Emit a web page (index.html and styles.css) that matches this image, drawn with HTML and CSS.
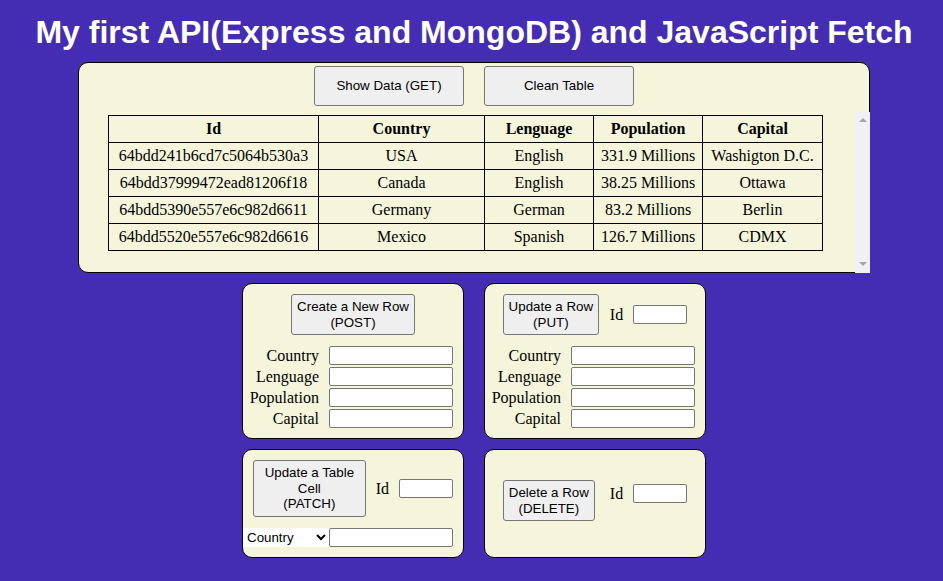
FILE: index.html
```html
<!DOCTYPE html>
<html lang="en">
<head>
<meta charset="utf-8">
<title>My first API</title>
<link rel="stylesheet" href="styles.css">
</head>
<body>
<h1 class="title">My first API(Express and MongoDB) and JavaScript Fetch</h1>

<section class="data-panel">
  <div class="actions">
    <button class="btn btn-wide">Show Data (GET)</button>
    <button class="btn btn-wide">Clean Table</button>
  </div>
  <div class="table-area">
    <div class="table-wrap">
      <table class="data-table">
        <colgroup>
          <col class="c-id"><col class="c-country"><col class="c-lang"><col class="c-pop"><col class="c-cap">
        </colgroup>
        <thead>
          <tr><th>Id</th><th>Country</th><th>Lenguage</th><th>Population</th><th>Capital</th></tr>
        </thead>
        <tbody>
          <tr><td>64bdd241b6cd7c5064b530a3</td><td>USA</td><td>English</td><td>331.9 Millions</td><td>Washigton D.C.</td></tr>
          <tr><td>64bdd37999472ead81206f18</td><td>Canada</td><td>English</td><td>38.25 Millions</td><td>Ottawa</td></tr>
          <tr><td>64bdd5390e557e6c982d6611</td><td>Germany</td><td>German</td><td>83.2 Millions</td><td>Berlin</td></tr>
          <tr><td>64bdd5520e557e6c982d6616</td><td>Mexico</td><td>Spanish</td><td>126.7 Millions</td><td>CDMX</td></tr>
        </tbody>
      </table>
    </div>
    <div class="scroll-rail" aria-hidden="true">
      <span class="arrow arrow-up"></span>
      <span class="arrow arrow-down"></span>
    </div>
  </div>
</section>

<section class="forms">
  <div class="card">
    <div class="card-top">
      <button class="btn btn-post">Create a New Row<br>(POST)</button>
    </div>
    <div class="fields">
      <label class="field-label">Country</label><input class="field-input" type="text">
      <label class="field-label">Lenguage</label><input class="field-input" type="text">
      <label class="field-label">Population</label><input class="field-input" type="text">
      <label class="field-label">Capital</label><input class="field-input" type="text">
    </div>
  </div>

  <div class="card">
    <div class="card-top">
      <button class="btn btn-put">Update a Row<br>(PUT)</button>
      <label class="id-label id-put">Id</label><input class="id-input" type="text">
    </div>
    <div class="fields">
      <label class="field-label">Country</label><input class="field-input" type="text">
      <label class="field-label">Lenguage</label><input class="field-input" type="text">
      <label class="field-label">Population</label><input class="field-input" type="text">
      <label class="field-label">Capital</label><input class="field-input" type="text">
    </div>
  </div>

  <div class="card">
    <div class="card-top">
      <button class="btn btn-patch">Update a Table Cell<br>(PATCH)</button>
      <label class="id-label id-patch">Id</label><input class="id-input" type="text">
    </div>
    <div class="patch-row">
      <select class="patch-select">
        <option>Country</option>
        <option>Lenguage</option>
        <option>Population</option>
        <option>Capital</option>
      </select><input class="field-input" type="text">
    </div>
  </div>

  <div class="card">
    <div class="card-top card-top-delete">
      <button class="btn btn-delete">Delete a Row<br>(DELETE)</button>
      <label class="id-label id-delete">Id</label><input class="id-input" type="text">
    </div>
  </div>
</section>
</body>
</html>
```

FILE: styles.css
```css
html, body {
  margin: 0;
  background: #452db3;
}

body {
  padding: 0 0 0 5px;
  font-family: "Liberation Serif", "Times New Roman", serif;
  font-size: 16px;
  color: #000;
}

.title {
  margin: 14px 0 11px;
  font-family: "Liberation Sans", Arial, sans-serif;
  font-size: 32px;
  line-height: 37px;
  font-weight: bold;
  color: #fff;
  text-align: center;
  white-space: nowrap;
}

.btn {
  box-sizing: border-box;
  margin: 0;
  padding: 4px 2px;
  font-family: "Liberation Sans", Arial, sans-serif;
  font-size: 13.3333px;
  line-height: 15.5px;
  color: #000;
  background: #efefef;
  border: 1px solid #767676;
  border-radius: 3px;
  text-align: center;
}

.btn-wide {
  width: 150px;
  height: 40px;
}

.btn-post { width: 124px; }
.btn-put { width: 96px; }
.btn-patch { width: 113px; }
.btn-delete { width: 92px; }

.data-panel {
  box-sizing: border-box;
  width: 792px;
  margin: 0 auto;
  padding-top: 3px;
  background: #f5f5dc;
  border: 1px solid #000;
  border-radius: 10px;
}

.actions {
  display: flex;
  justify-content: center;
  gap: 20px;
}

.table-area {
  display: flex;
  margin: 6px -1px -1px 0;
  height: 161px;
}

.table-wrap {
  flex: 1;
  min-width: 0;
  padding-right: 3px;
}

.scroll-rail {
  flex: none;
  width: 15px;
  background: #f1f1f1;
  display: flex;
  flex-direction: column;
  justify-content: space-between;
  align-items: center;
  padding: 6px 0 7px;
  box-sizing: border-box;
}

.arrow {
  width: 0;
  height: 0;
  border-left: 4px solid transparent;
  border-right: 4px solid transparent;
}

.arrow-up {
  border-bottom: 4px solid #a3a3a3;
}

.arrow-down {
  border-top: 4px solid #a3a3a3;
}

.data-table {
  width: 714px;
  margin: 3px auto 0;
  border-collapse: collapse;
  table-layout: fixed;
}

.c-id { width: 210px; }
.c-country { width: 166px; }
.c-lang { width: 109px; }
.c-pop { width: 109px; }
.c-cap { width: 120px; }

.data-table th,
.data-table td {
  border: 1px solid #000;
  padding: 4px 1px;
  line-height: 18px;
  text-align: center;
  white-space: nowrap;
}

.data-table th {
  font-weight: bold;
}

.forms {
  width: 464px;
  margin: 10px auto 0;
  display: grid;
  grid-template-columns: 222px 222px;
  column-gap: 20px;
  row-gap: 10px;
}

.card {
  box-sizing: border-box;
  padding: 10px;
  background: #f5f5dc;
  border: 1px solid #000;
  border-radius: 10px;
}

.card-top {
  display: flex;
  justify-content: center;
  align-items: center;
}

.card-top-delete {
  align-items: flex-start;
  padding-top: 20px;
}

.id-label {
  line-height: 19px;
  margin-right: 10px;
}

.id-put { margin-left: 11px; }
.id-patch { margin-left: 10px; }
.id-delete { margin-left: 15px; }

.card-top-delete .id-label,
.card-top-delete .id-input {
  margin-top: 4px;
}

.id-input,
.field-input {
  box-sizing: border-box;
  height: 19px;
  margin: 0;
  padding: 1px 2px;
  background: #fff;
  border: 1px solid #767676;
  border-radius: 2px;
  font-family: "Liberation Sans", Arial, sans-serif;
  font-size: 13.3333px;
}

.id-input { width: 54px; }
.field-input { width: 124px; }

.fields {
  display: grid;
  grid-template-columns: max-content 124px;
  justify-content: end;
  align-items: center;
  column-gap: 10px;
  row-gap: 2px;
  margin-top: 11px;
}

.field-label {
  line-height: 19px;
  text-align: right;
}

.patch-row {
  display: flex;
  justify-content: flex-end;
  margin-top: 11px;
}

.patch-select {
  box-sizing: border-box;
  flex: none;
  width: 86px;
  height: 19px;
  margin: 0;
  padding: 0;
  background: #fff;
  border: none;
  font-family: "Liberation Sans", Arial, sans-serif;
  font-size: 13.3333px;
  color: #000;
}

.patch-row .field-input {
  flex: none;
}
```
